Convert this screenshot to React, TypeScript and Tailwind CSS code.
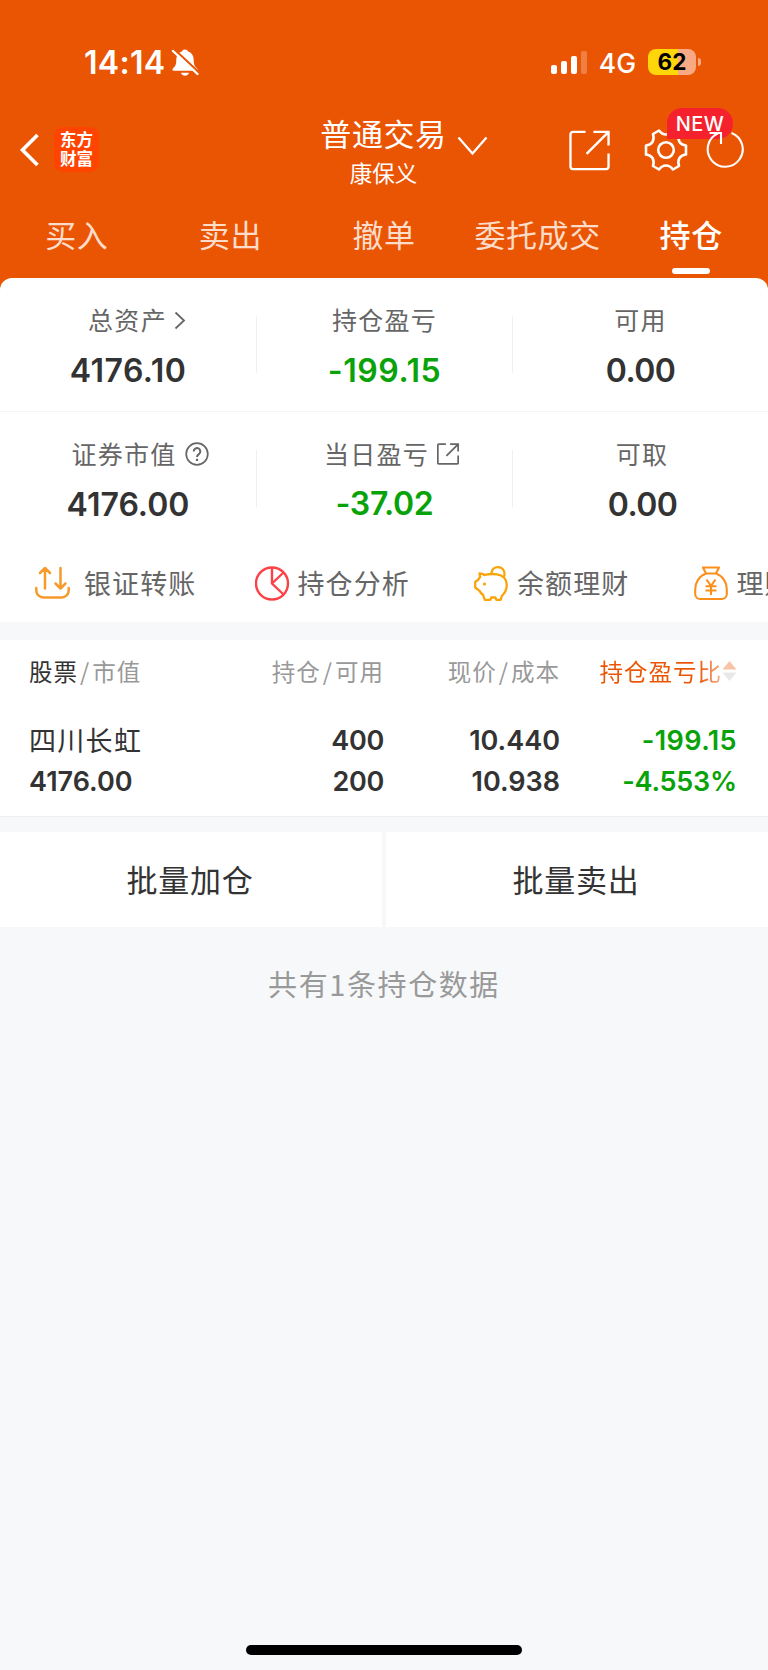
import type { ReactNode } from "react"

type StatProps = {
  label: string;
  value: string;
  labelIcon?: ReactNode;
  green?: boolean;
  labelClass?: string;
  valueClass?: string;
}

const tabs = ["买入", "卖出", "撤单", "委托成交", "持仓"]

function StatusBar() {
  return (
    <div className="flex h-[102px] items-start pt-[43px] pl-[84px] pr-[67px] text-white">
      <span className="font-['Inter'] text-[32px] font-semibold leading-[40px] tracking-[0.3px]">14:14</span>
      <svg className="mt-[5px] ml-[6px]" width="28" height="29" viewBox="0 0 28 29" fill="none">
        <path d="M14 1.500c-1.700 0-2.700.900-3 2C7 4.800 5.300 8.200 5.300 12c0 5-1.200 6.500-3.400 8.500-.900.900-.5 2.200.800 2.200h22.600c1.300 0 1.700-1.300.800-2.200-2.200-2-3.400-3.500-3.400-8.500 0-3.800-1.700-7.200-5.700-8.500-.300-1.100-1.300-2-3-2z" fill="#fff" />
        <path d="M10 24.800h8c-.4 1.700-2 2.900-4 2.900s-3.600-1.200-4-2.900z" fill="#fff" />
        <path d="M3 1l25 23.500" stroke="#ea5504" strokeWidth="2.200" />
        <path d="M2 3l24.500 23" stroke="#fff" strokeWidth="2.400" strokeLinecap="round" />
      </svg>
      <div className="mt-[8px] ml-auto flex items-end gap-[4px]">
        <i className="h-[9px] w-[6px] rounded-[2px] bg-white" />
        <i className="h-[13px] w-[6px] rounded-[2px] bg-white" />
        <i className="h-[18px] w-[6px] rounded-[2px] bg-white" />
        <i className="h-[23px] w-[6px] rounded-[2px] bg-white/25" />
      </div>
      <span className="ml-[12px] font-['Inter'] text-[26.5px] font-medium leading-[40px]">4G</span>
      <div className="mt-[6px] ml-[12px] flex h-[26px] w-[48px] items-center justify-center rounded-[8px] bg-[linear-gradient(90deg,#ffd60a_62%,#f6a982_62%)] font-['Inter'] text-[22.500px] font-bold text-black">62</div>
      <i className="mt-[15px] ml-[2px] h-[8px] w-[3px] rounded-r-full bg-white/50" />
    </div>
  )
}

function ShareIcon({ size, stroke }: { size: number; stroke: number }) {
  return (
    <svg width={size} height={size} viewBox="0 0 42 42" fill="none" stroke="currentColor" strokeWidth={stroke}>
      <path d="M17 2H4a2.500 2.500 0 0 0-2.500 2.500v33A2.500 2.500 0 0 0 4 40h34a2.500 2.500 0 0 0 2.500-2.500V24" />
      <path d="M25 2h15.500v14M40 2.500L18 24.500" />
    </svg>
  )
}

function NavBar() {
  return (
    <div className="flex h-[90px] items-start text-white">
      <svg className="mt-[31px] ml-[18px]" width="22" height="34" viewBox="0 0 22 34" fill="none">
        <path d="M19.500 2L4.500 17l15 15" stroke="#fff" strokeWidth="3.600" />
      </svg>
      <div className="mt-[25px] ml-[14px] flex h-[45px] w-[45px] flex-col items-center rounded-[9px] bg-[#ff4400] pt-[3px] text-[16.500px] font-bold leading-[19px]">
        <span>东方</span>
        <span>财富</span>
      </div>
      <div className="ml-[221px] w-[127px] pt-[11px] text-center">
        <div className="whitespace-nowrap text-[31px] leading-[40px] tracking-[0.6px]">普通交易</div>
        <div className="mt-[3px] text-[22.500px] leading-[32px]">康保义</div>
      </div>
      <svg className="mt-[34px] ml-[10px]" width="31" height="21" viewBox="0 0 31 21" fill="none">
        <path d="M1.500 1.500l14 16 14-16" stroke="#fff" strokeWidth="2.300" />
      </svg>
      <div className="mt-[28px] ml-[81px]">
        <ShareIcon size={41} stroke={2.4} />
      </div>
      <div className="relative mt-[26px] ml-[34px] flex">
        <svg width="44" height="44" viewBox="-22 -22 44 44" fill="none" stroke="#fff" strokeWidth="2.600" strokeLinejoin="round">
          <path d="M-7-19.500Q-4-15.500 0-15.500Q4-15.500 7-19.500L13-16Q11.500-11.500 13.500-8Q15.500-5 20-4.500V4.500Q15.500 5 13.500 8Q11.500 11.500 13 16L7 19.500Q4 15.500 0 15.500Q-4 15.500-7 19.500L-13 16Q-11.500 11.500-13.500 8Q-15.500 5-20 4.500V-4.500Q-15.500-5-13.500-8Q-11.500-11.500-13-16Z" />
          <circle cx="0" cy="0" r="7.800" />
        </svg>
        <span className="absolute -top-[20px] left-[23px] flex h-[31px] w-[66px] items-center justify-center rounded-[15px] rounded-bl-none bg-[#f5222d] font-['Inter'] text-[20px] font-medium tracking-[0.5px]">NEW</span>
        <svg className="relative ml-[18px]" width="40" height="44" viewBox="0 0 40 44" fill="none" stroke="#fff" strokeWidth="2.100">
          <path d="M25.500 4.900A17.500 17.500 0 1 1 12 5.300" />
          <path d="M3.500 5H15v11" />
        </svg>
      </div>
    </div>
  )
}

function Stat({ label, value, labelIcon, green, labelClass = "", valueClass = "" }: StatProps) {
  return (
    <div className="flex flex-col items-center">
      <div className={`flex h-[36px] items-center text-[25px] leading-[36px] tracking-[1.300px] text-[#666] ${labelClass}`}>
        {label}
        {labelIcon}
      </div>
      <div className={`h-[40px] font-['Inter'] text-[32px] font-semibold leading-[40px] ${green ? "text-[#09a309]" : "text-[#333]"} ${valueClass}`}>
        {value}
      </div>
    </div>
  )
}

function Divider() {
  return <i className="mt-[15px] h-[57px] w-px bg-[#f0f0f0]" />
}

function QuickLink({ label, icon, gap = "gap-[8px]" }: { label: string; icon: ReactNode; gap?: string }) {
  return (
    <div className={`flex w-[219.500px] shrink-0 items-center ${gap}`}>
      {icon}
      <span className="-mt-[2px] whitespace-nowrap text-[27px] leading-[40px] tracking-[1.100px] text-[#666]">{label}</span>
    </div>
  )
}

export default function App() {
  return (
    <div className="flex h-[1670px] w-[768px] flex-col overflow-hidden bg-[#f6f8fa] font-['Noto_Sans_CJK_SC',sans-serif]">
      <header className="h-[290px] shrink-0 bg-[#ea5504]">
        <StatusBar />
        <NavBar />
        <nav className="grid h-[86px] grid-cols-5">
          {tabs.map((tab, i) => (
            <div key={tab} className="flex flex-col items-center pt-[22px]">
              <span className={`whitespace-nowrap text-[31px] leading-[40px] tracking-[0.6px] ${i === 4 ? "font-medium text-white" : "text-[#fddcca]"}`}>{tab}</span>
              {i === 4 && <i className="mt-[14px] h-[6px] w-[38px] rounded-full bg-white" />}
            </div>
          ))}
        </nav>
      </header>

      <section className="relative -mt-[12px] shrink-0 rounded-t-[12px] bg-white">
        <div className="grid h-[134px] grid-cols-[256px_1px_255px_1px_255px] border-b border-[#f4f4f4] pt-[23px]">
          <Stat
            label="总资产"
            value="4176.10"
            labelClass="ml-[18px]"
            valueClass="mt-[14px] tracking-[0.500px]"
            labelIcon={
              <svg className="mt-[2px] ml-[7px]" width="12" height="19" viewBox="0 0 12 19" fill="none">
                <path d="M1.500 1.500l8.500 8-8.500 8" stroke="#666" strokeWidth="1.800" />
              </svg>
            }
          />
          <Divider />
          <Stat label="持仓盈亏" value="-199.15" green valueClass="mt-[14px] tracking-[0.600px]" />
          <Divider />
          <Stat label="可用" value="0.00" valueClass="mt-[14px] tracking-[-0.600px]" />
        </div>
        <div className="grid h-[133px] grid-cols-[256px_1px_255px_1px_255px] pt-[23px]">
          <Stat
            label="证券市值"
            value="4176.00"
            labelClass="ml-[24px]"
            valueClass="mt-[14px]"
            labelIcon={
              <svg className="mt-[2px] ml-[8px]" width="24" height="24" viewBox="0 0 24 24" fill="none" stroke="#666" strokeWidth="1.700">
                <circle cx="12" cy="12" r="10.800" />
                <path d="M8.700 9.400a3.300 3.300 0 1 1 5.200 2.700c-1.200.900-1.900 1.400-1.900 3" strokeWidth="2" />
                <path d="M12 16.800v2.200" strokeWidth="2.200" />
              </svg>
            }
          />
          <Divider />
          <Stat
            label="当日盈亏"
            value="-37.02"
            green
            labelClass="ml-[14px]"
            valueClass="mt-[13px] tracking-[-0.300px]"
            labelIcon={<span className="mt-[2px] ml-[8px]"><ShareIcon size={22} stroke={3.5} /></span>}
          />
          <Divider />
          <Stat label="可取" value="0.00" labelClass="ml-[3px]" valueClass="mt-[14px] ml-[4px] tracking-[-0.600px]" />
        </div>
        <div className="flex h-[77px] overflow-hidden pl-[35px]">
          <QuickLink
            label="银证转账"
            gap="gap-[14px]"
            icon={
              <svg width="35" height="35" viewBox="0 0 35 35" fill="none" stroke="#f59a2b" strokeWidth="2.500" strokeLinecap="round" strokeLinejoin="round">
                <path d="M1.300 22v2.500a7 7 0 0 0 7 7h18.400a7 7 0 0 0 7-7v-2.500" />
                <path d="M10 22.500V2M5 7l5-5 5 5M25.500 2v20.500M20.500 17.500l5 5 5-5" />
              </svg>
            }
          />
          <QuickLink
            label="持仓分析"
            icon={
              <svg width="35" height="35" viewBox="0 0 35 35" fill="none" stroke="#fd4247" strokeWidth="2.400">
                <circle cx="17" cy="17.500" r="16" />
                <path d="M17 1.500v16l11.500 11M17 17.500L28.500 6.500" />
              </svg>
            }
          />
          <QuickLink
            label="余额理财"
            icon={
              <svg width="35" height="35" viewBox="0 0 35 35" fill="none" stroke="#f9a408" strokeWidth="2.300" strokeLinejoin="round">
                <path d="M5.500 7.500c2 0 3.800.600 5 1.500 3.500-1 8.500-1.200 12.500-.700 6 .800 9.800 5 9.800 10.200 0 5-2 8.800-5 11.500l-1.200 3.800h-4.300l-1-2.300h-4l-1 2.300h-5.500l-1.800-5c-1.500-1-2.800-2.300-3.500-4L1.200 21.500v-5.500l3.300-2.500c.200-1 .900-1.900 1.700-2.500z" />
                <path d="M17.300 7.500c.7-4 3.400-6.300 6.700-6.300 4 0 6.800 3 6.500 7 0 1-.3 2-.800 2.800" />
                <circle cx="10.500" cy="18" r="1.600" fill="#f9a408" stroke="none" />
              </svg>
            }
          />
          <QuickLink
            label="理财"
            icon={
              <svg width="35" height="35" viewBox="0 0 35 35" fill="none" stroke="#fb8f1c" strokeWidth="2.100" strokeLinejoin="round">
                <path d="M9 1.500h16l-3 6H12zM12 7.500C5 10 1.200 16.500 1.200 23.500v4.500a5 5 0 0 0 5 5h21.600a5 5 0 0 0 5-5v-4.500c0-7-3.800-13.500-10.800-16" />
                <path d="M12.500 13.500l4.500 6.500 4.500-6.500M11.500 20.300h11M11.500 24.500h11M17 20v9" />
              </svg>
            }
          />
        </div>
      </section>

      <section className="mt-[18px] h-[177px] shrink-0 border-b border-[#efeff2] bg-white pt-[13px] pl-[29px] pr-[31px]">
        <div className="grid grid-cols-[190px_165px_176px_177px] text-[23.500px] leading-[36px] tracking-[1px] text-[#999]">
          <span><span className="text-[#333]">股票</span><span className="mx-[2px]">/</span>市值</span>
          <span className="text-right">持仓<span className="mx-[2px]">/</span>可用</span>
          <span className="text-right">现价<span className="mx-[2px]">/</span>成本</span>
          <span className="flex items-center justify-end">
            <span className="bg-[linear-gradient(90deg,#ea5504_80%,#f6b08a)] bg-clip-text text-transparent">持仓盈亏比</span>
            <svg width="15" height="22" viewBox="0 0 15 22">
              <path d="M7.500 1l7 8.500h-14z" fill="#f8c4a8" />
              <path d="M7.500 21l7-8.500h-14z" fill="#e8e8e8" />
            </svg>
          </span>
        </div>
        <div className="mt-[31px] grid grid-cols-[190px_165px_176px_177px] text-right font-['Inter'] text-[27px] font-semibold leading-[41px] text-[#333]">
          <span className="-mt-px text-left font-['Noto_Sans_CJK_SC'] font-normal tracking-[1.300px]">四川长虹</span>
          <span className="tracking-[-0.300px]">400</span>
          <span>10.440</span>
          <span className="tracking-[0.400px] text-[#09a309]">-199.15</span>
          <span className="text-left">4176.00</span>
          <span className="tracking-[-0.300px]">200</span>
          <span>10.938</span>
          <span className="tracking-[-0.200px] text-[#09a309]">-4.553%</span>
        </div>
      </section>

      <div className="mt-[15px] grid h-[95px] shrink-0 grid-cols-2 gap-[4px] text-center text-[31px] leading-[93px] tracking-[0.700px] text-[#333]">
        <button className="bg-white pr-[2px] pb-[2px]">批量加仓</button>
        <button className="bg-white pr-[2px] pb-[2px]">批量卖出</button>
      </div>

      <p className="mt-[36px] text-center text-[29px] leading-[40px] tracking-[1.600px] text-[#999]">共有1条持仓数据</p>

      <div className="mx-auto mt-auto mb-[15px] h-[10px] w-[276px] rounded-full bg-black" />
    </div>
  )
}
